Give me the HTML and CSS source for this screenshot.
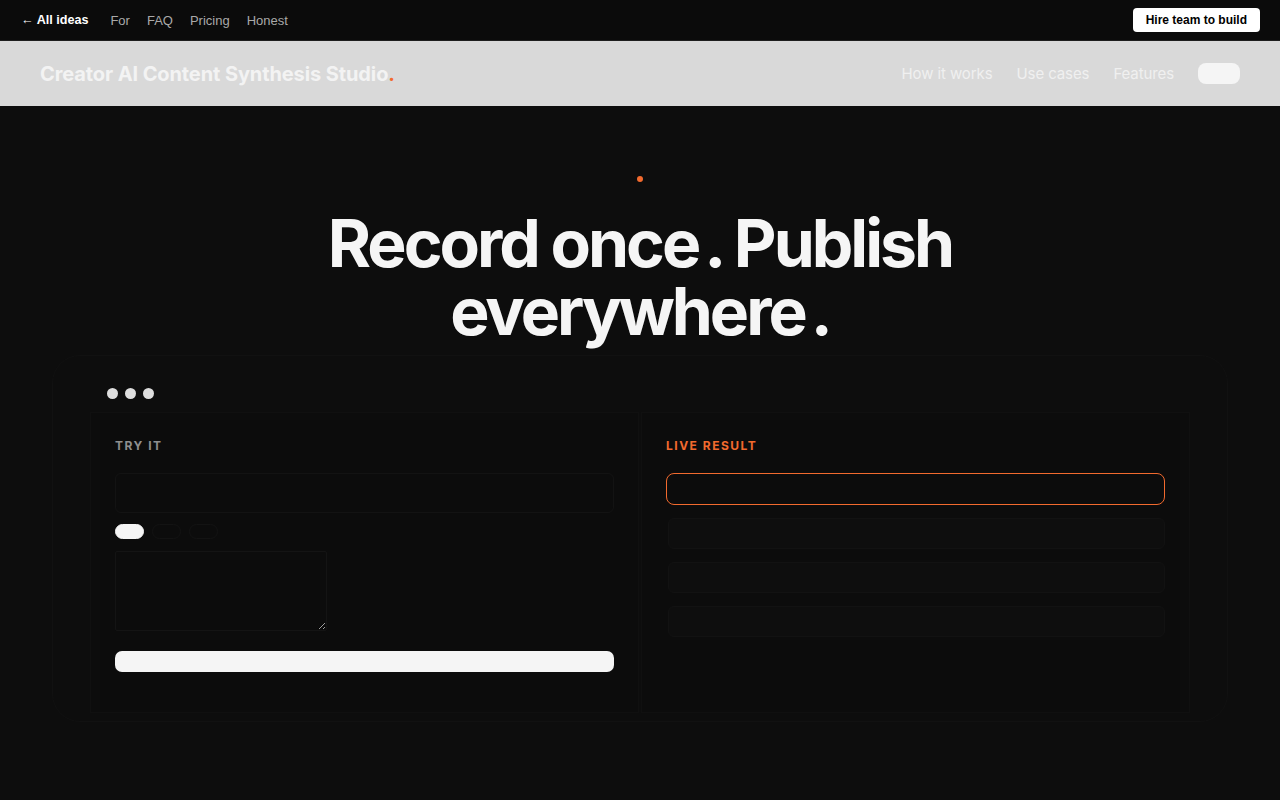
FILE: index.html
```html
<!DOCTYPE html>
<html lang="en">

<head>
    <meta charset="UTF-8">
    <meta name="viewport" content="width=device-width, initial-scale=1.0">
    <title>Creator AI Content Synthesis Studio</title>
    <link rel="stylesheet" href="styles.css">
</head>

<body>
    <!-- top strip -->
    <div class="topbar">
        <div class="topbar-left">
            <a href="#" class="back-link">&larr; All ideas</a>
            <a href="#" class="top-link">For</a>
            <a href="#" class="top-link">FAQ</a>
            <a href="#" class="top-link">Pricing</a>
            <a href="#" class="top-link">Honest</a>
        </div>
        <a href="#" class="hire-button">Hire team to build</a>
    </div>

    <header class="site-header">
        <div class="brand">Creator AI Content Synthesis Studio<span class="accent">.</span></div>
        <nav class="main-nav">
            <a href="#">How it works</a>
            <a href="#">Use cases</a>
            <a href="#">Features</a>
            <span class="nav-pill"></span>
        </nav>
    </header>

    <section class="hero">
        <span class="hero-dot"></span>
        <h1>Record once<span class="stop">.</span> Publish<br>everywhere<span class="stop">.</span></h1>
    </section>

    <div class="demo-card">
        <div class="window-dots">
            <span></span><span></span><span></span>
        </div>
        <div class="demo-grid">
            <div class="demo-panel">
                <div class="panel-label">TRY IT</div>
                <div class="fake-input"></div>
                <div class="chips">
                    <span class="chip active"></span>
                    <span class="chip"></span>
                    <span class="chip"></span>
                </div>
                <textarea class="fake-area"></textarea>
                <div class="run-button"></div>
            </div>
            <div class="demo-panel">
                <div class="panel-label orange">LIVE RESULT</div>
                <div class="result-main"></div>
                <div class="result-row"></div>
                <div class="result-row"></div>
                <div class="result-row"></div>
            </div>
        </div>
    </div>
</body>

</html>
```

FILE: styles.css
```css
body {
    margin: 0;
    background-color: #0d0d0d;
    font-family: Inter, "Liberation Sans", sans-serif;
    color: #f5f5f5;
}

a {
    text-decoration: none;
}

.topbar {
    height: 40px;
    display: flex;
    align-items: center;
    justify-content: space-between;
    padding: 0 20px 0 21px;
    background-color: #0b0b0b;
    border-bottom: 1px solid #1e1e1e;
    font-family: "Liberation Sans", Arial, sans-serif;
    font-size: 13px;
}

.topbar-left {
    display: flex;
    align-items: center;
    gap: 17px;
}

.back-link {
    color: #fff;
    font-weight: bold;
    font-size: 12.6px;
    margin-right: 5px;
}

.top-link {
    color: #a9a9a9;
}

.hire-button {
    background-color: #fff;
    color: #000;
    font-size: 12px;
    font-weight: bold;
    padding: 5px 13px;
    border-radius: 4px;
}

.site-header {
    height: 65px;
    display: flex;
    align-items: center;
    justify-content: space-between;
    padding: 0 40px;
    background-color: #d9d9d9;
}

.brand {
    font-size: 20px;
    font-weight: 700;
    letter-spacing: -0.1px;
    color: #f3f3f3;
}

.accent {
    color: #f26a2e;
}

.main-nav {
    display: flex;
    align-items: center;
    gap: 24px;
}

.main-nav a {
    color: #f0f0f0;
    font-size: 15px;
    letter-spacing: -0.1px;
}

.nav-pill {
    width: 42px;
    height: 21px;
    background-color: #f5f5f5;
    border-radius: 8px;
}

.hero {
    display: flex;
    flex-direction: column;
    align-items: center;
    padding-top: 70px;
}

.hero-dot {
    width: 6px;
    height: 6px;
    border-radius: 50%;
    background-color: #f26a2e;
}

.hero h1 {
    margin: 27px 0 0;
    text-align: center;
    font-size: 66px;
    line-height: 68px;
    font-weight: 700;
    letter-spacing: -3px;
    color: #f5f5f5;
}

.stop {
    margin-left: 6px;
}

.demo-card {
    margin: 10px 52px 0;
    padding: 32px 37px 8px;
    border: 1px solid #111;
    border-radius: 28px;
    background-color: #0d0d0d;
}

.window-dots {
    display: flex;
    gap: 7px;
    padding-left: 17px;
    margin-bottom: 13px;
}

.window-dots span {
    width: 11px;
    height: 11px;
    border-radius: 50%;
    background-color: #dedede;
}

.demo-grid {
    display: grid;
    grid-template-columns: 1fr 1fr;
    gap: 2px;
}

.demo-panel {
    padding: 25px 24px 40px;
    background-color: #0c0c0c;
    border: 1px solid #101010;
    display: flex;
    flex-direction: column;
}

.panel-label {
    font-size: 12px;
    line-height: 15px;
    font-weight: 700;
    letter-spacing: 1.5px;
    color: #8f8f8f;
    margin-bottom: 20px;
}

.panel-label.orange {
    color: #f26a2e;
}

.fake-input {
    height: 38px;
    border: 1px solid #131313;
    border-radius: 6px;
    margin-bottom: 11px;
}

.chips {
    display: flex;
    gap: 8px;
    margin-bottom: 12px;
}

.chip {
    width: 27px;
    height: 13px;
    border-radius: 8px;
    border: 1px solid #131313;
}

.chip.active {
    background-color: #f5f5f5;
    border-color: #f5f5f5;
}

.fake-area {
    width: 206px;
    height: 74px;
    background-color: #0c0c0c;
    border: 1px solid #141414;
    border-radius: 2px;
    margin-bottom: 20px;
}

.run-button {
    height: 21px;
    background-color: #f5f5f5;
    border-radius: 7px;
}

.result-main {
    height: 30px;
    border: 1px solid #f26a2e;
    border-radius: 8px;
    margin-bottom: 13px;
}

.result-row {
    height: 29px;
    margin: 0 0 13px 2px;
    border: 1px solid #121212;
    border-radius: 6px;
    background-color: #0e0e0e;
}
```
